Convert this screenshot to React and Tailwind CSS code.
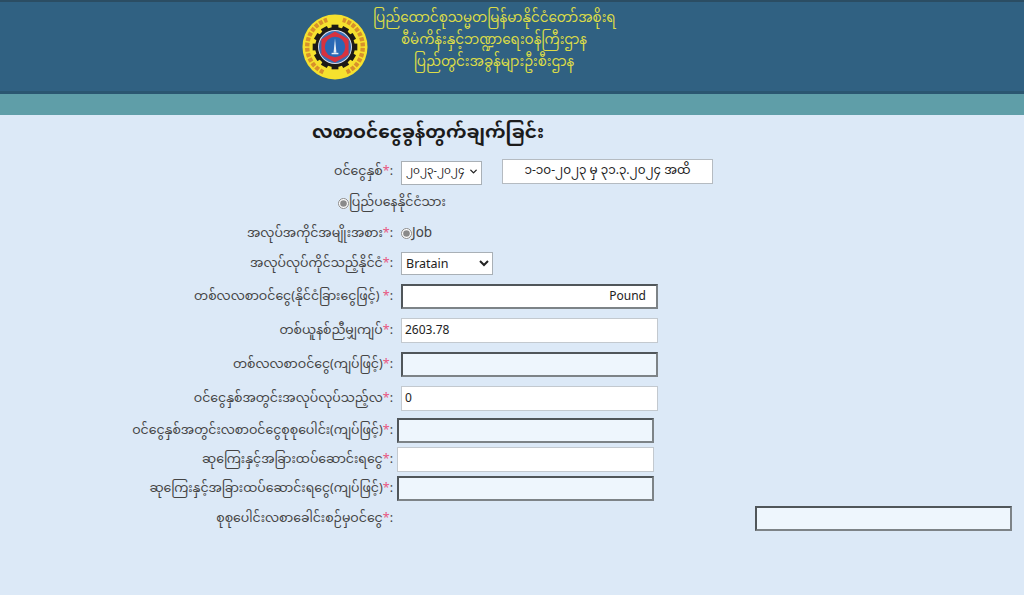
import { ChevronDown } from 'lucide-react';

const font = { fontFamily: '"Noto Sans Myanmar", Padauk, "Myanmar Text", "Noto Sans", "DejaVu Sans", sans-serif' };

const Logo = () => {
  const teeth = Array.from({ length: 12 }, (_, i) => i * 30);
  return (
    <svg width="66" height="66" viewBox="0 0 68 68" className="mt-[12px] shrink-0">
      <circle cx="34" cy="34" r="33.5" fill="#f6e12e" />
      <path d="M22 60 A29 29 0 0 1 26 6" fill="none" stroke="#d8902c" strokeWidth="4.5" strokeDasharray="4 1.5" />
      <path d="M46 60 A29 29 0 0 0 42 6" fill="none" stroke="#d8902c" strokeWidth="4.5" strokeDasharray="4 1.5" />
      {teeth.map((a) => (
        <rect key={a} x="30.5" y="11" width="7" height="5" fill="#1d1a16" transform={`rotate(${a} 34 34)`} />
      ))}
      <circle cx="34" cy="34" r="20.5" fill="#1d1a16" />
      <circle cx="34" cy="34" r="17.5" fill="#d9deee" />
      <circle cx="34" cy="34" r="16.5" fill="#3a6fb4" />
      <polygon points="34,18 48,26 48,42 34,50 20,42 20,26" fill="#d8323f" />
      <circle cx="34" cy="34" r="10.5" fill="#2a68b5" />
      <path d="M34 25 L35.5 40 L32.5 40 Z" fill="#e8eef5" />
      <rect x="30.5" y="40" width="7" height="1.5" fill="#e8eef5" />
    </svg>
  );
};

const Label = ({ text, space }) => (
  <label className="w-[393px] shrink-0 pt-[2px] text-right text-[12.5px] leading-none text-[#444]">
    {text}
    {space ? ' ' : ''}
    <span className="text-[#e8557f]">*</span>:
  </label>
);

const baseInput = 'h-[25px] w-[257px] px-[3px] text-[12px] text-[#222] outline-none';
const plainField = 'border border-[#c3c9cf] bg-white';
const insetBorder = 'border-2 border-t-[#50565a] border-l-[#50565a] border-r-[#7d8387] border-b-[#7d8387]';
const darkField = `${insetBorder} bg-[#eef6fd]`;

const Row = ({ className, children }) => (
  <div className={`flex items-center ${className}`}>{children}</div>
);

export default function App() {
  return (
    <div className="h-[595px] w-[1024px] overflow-hidden bg-[#dce9f7]" style={font}>
      <header className="flex h-[94px] border-t-[2px] border-b-[3px] border-t-[#2b4d63] border-b-[#2a5670] bg-[#306182] pl-[302px]">
        <Logo />
        <div className="ml-[5px] w-[242px] pt-[6px] text-center text-[13.5px] leading-[22px] text-[#dcdc48]">
          <div className="whitespace-nowrap">ပြည်ထောင်စုသမ္မတမြန်မာနိုင်ငံတော်အစိုးရ</div>
          <div className="whitespace-nowrap">စီမံကိန်းနှင့်ဘဏ္ဍာရေးဝန်ကြီးဌာန</div>
          <div className="whitespace-nowrap">ပြည်တွင်းအခွန်များဦးစီးဌာန</div>
        </div>
      </header>
      <div className="h-[21px] bg-[#5f9ea8]" />

      <main>
        <h1 className="h-[42px] pl-[312px] pt-[5px] text-[18.5px] font-bold leading-[28px] text-[#1b1b1b]">
          လစာဝင်ငွေခွန်တွက်ချက်ခြင်း
        </h1>

        <Row className="h-[28px] gap-[8px]">
          <Label text="ဝင်ငွေနှစ်" />
          <div className="relative h-[24px] w-[81px]">
            <select className="h-[24px] w-[81px] appearance-none border border-[#a9b0b6] bg-white pb-[3px] pl-[4px] text-[10.5px] text-[#222]" defaultValue="a">
              <option value="a">၂၀၂၃-၂၀၂၄</option>
            </select>
            <ChevronDown size={11} strokeWidth={3} className="pointer-events-none absolute right-[3px] top-[7px] text-[#222]" />
          </div>
          <input
            readOnly
            value="၁-၁၀-၂၀၂၃ မှ ၃၁.၃.၂၀၂၄ အထိ"
            className="ml-[12px] h-[25px] w-[211px] border border-[#b5bbc1] bg-white text-center text-[12px] text-[#222] outline-none"
          />
        </Row>

        <Row className="mt-[5px] h-[26px] pl-[338px] text-[12.5px] text-[#444]">
          <input type="radio" readOnly checked className="h-[11px] w-[11px] accent-[#8a8a8a]" />
          <span>ပြည်ပနေနိုင်ငံသား</span>
        </Row>

        <Row className="mt-[4px] h-[26px] gap-[8px]">
          <Label text="အလုပ်အကိုင်အမျိုးအစား" />
          <div className="flex items-center text-[13.5px] leading-none text-[#444]">
            <input type="radio" readOnly checked className="h-[11px] w-[11px] accent-[#8a8a8a]" />
            <span className="font-['Noto_Sans']">Job</span>
          </div>
        </Row>

        <Row className="mt-[4px] h-[26px] gap-[8px]">
          <Label text="အလုပ်လုပ်ကိုင်သည့်နိုင်ငံ" />
          <select className="h-[23px] w-[92px] border border-[#a9b0b6] bg-white font-['Noto_Sans'] text-[12.5px] text-[#222]" defaultValue="Bratain">
            <option>Bratain</option>
          </select>
        </Row>

        <Row className="mt-[8px] h-[25px] gap-[8px]">
          <Label text="တစ်လလစာဝင်ငွေ(နိုင်ငံခြားငွေဖြင့်)" space />
          <input readOnly value="Pound" className={`${baseInput} ${insetBorder} bg-white pr-[10px] text-right`} />
        </Row>

        <Row className="mt-[9px] h-[25px] gap-[8px]">
          <Label text="တစ်ယူနစ်ညီမျှကျပ်" />
          <input readOnly value="2603.78" className={`${baseInput} ${plainField}`} />
        </Row>

        <Row className="mt-[9px] h-[25px] gap-[8px]">
          <Label text="တစ်လလစာဝင်ငွေ(ကျပ်ဖြင့်)" />
          <input readOnly className={`${baseInput} ${darkField}`} />
        </Row>

        <Row className="mt-[9px] h-[25px] gap-[8px]">
          <Label text="ဝင်ငွေနှစ်အတွင်းအလုပ်လုပ်သည့်လ" />
          <input readOnly value="0" className={`${baseInput} ${plainField}`} />
        </Row>

        <Row className="mt-[7px] h-[25px] gap-[4px]">
          <Label text="ဝင်ငွေနှစ်အတွင်းလစာဝင်ငွေစုစုပေါင်း(ကျပ်ဖြင့်)" />
          <input readOnly className={`${baseInput} ${darkField}`} />
        </Row>

        <Row className="mt-[4px] h-[25px] gap-[4px]">
          <Label text="ဆုကြေးနှင့်အခြားထပ်ဆောင်းရငွေ" />
          <input readOnly className={`${baseInput} ${plainField}`} />
        </Row>

        <Row className="mt-[4px] h-[25px] gap-[4px]">
          <Label text="ဆုကြေးနှင့်အခြားထပ်ဆောင်းရငွေ(ကျပ်ဖြင့်)" />
          <input readOnly className={`${baseInput} ${darkField}`} />
        </Row>

        <Row className="mt-[5px] h-[25px]">
          <Label text="စုစုပေါင်းလစာခေါင်းစဉ်မှဝင်ငွေ" />
          <input readOnly className={`${baseInput} ml-[362px] ${darkField}`} />
        </Row>
      </main>
    </div>
  );
}
